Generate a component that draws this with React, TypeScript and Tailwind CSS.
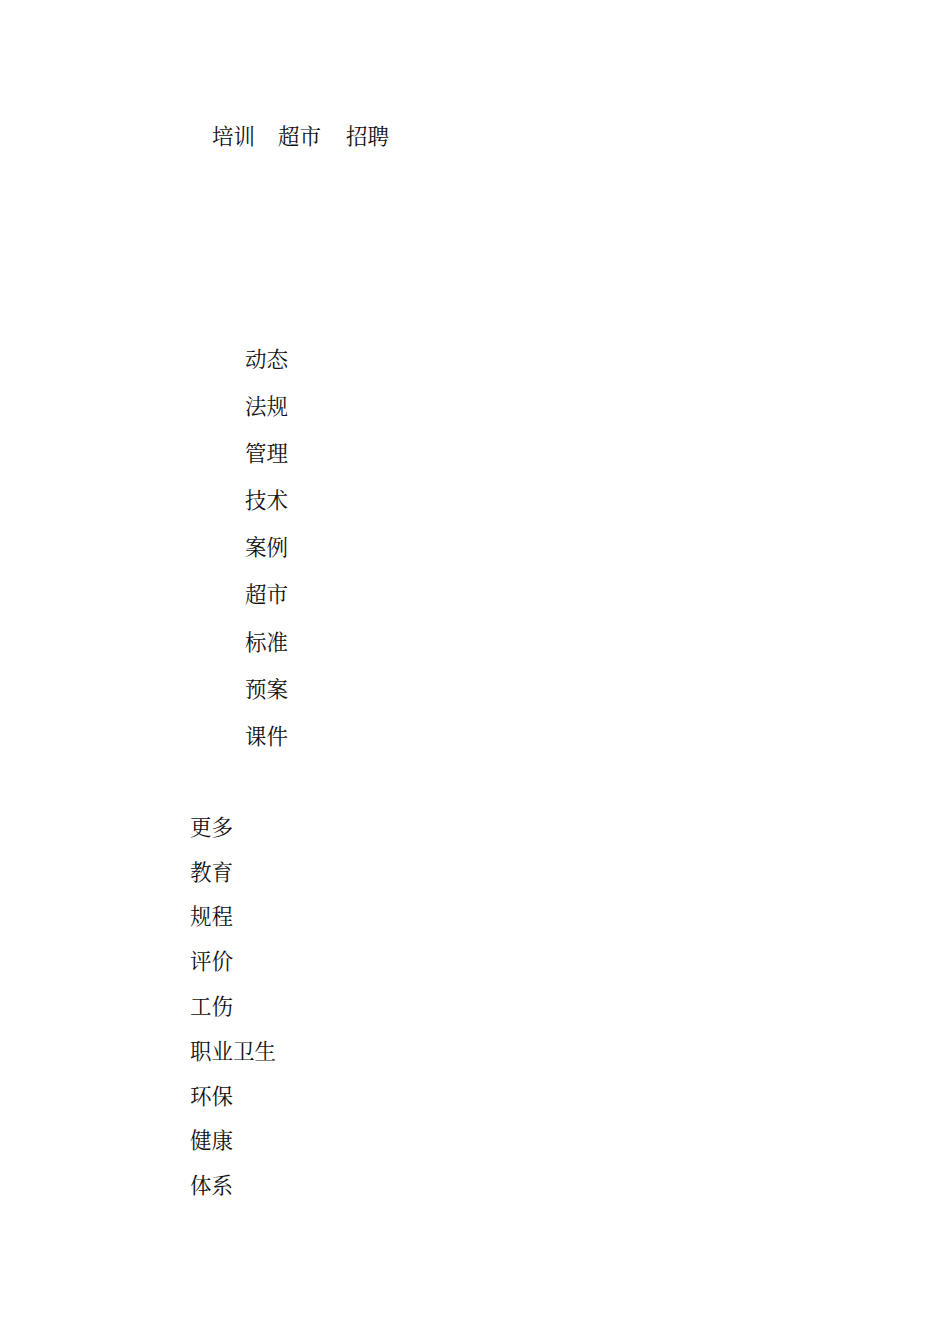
const topLinks = ['培训', '超市', '招聘'];

const channels = ['动态', '法规', '管理', '技术', '案例', '超市', '标准', '预案', '课件'];

const more = ['更多', '教育', '规程', '评价', '工伤', '职业卫生', '环保', '健康', '体系'];

export default function App() {
  return (
    <div
      className="w-[950px] min-h-[1344px] bg-white text-[#111] text-[21.5px]"
      style={{ fontFamily: '"Noto Serif CJK SC", "Liberation Serif", "Noto Sans CJK SC", serif' }}
    >
      <div className="pt-[111px] pl-[212px] flex leading-[47px]">
        {topLinks.map((t, i) => (
          <span key={t} className={i === 0 ? '' : i === 1 ? 'ml-[23px]' : 'ml-[25px]'}>
            {t}
          </span>
        ))}
      </div>

      <ul className="mt-[176px] pl-[245px] leading-[47.1px]">
        {channels.map((c, i) => (
          <li key={i}>{c}</li>
        ))}
      </ul>

      <ul className="mt-[46px] pl-[190px] leading-[44.8px]">
        {more.map((m) => (
          <li key={m}>{m}</li>
        ))}
      </ul>
    </div>
  );
}
